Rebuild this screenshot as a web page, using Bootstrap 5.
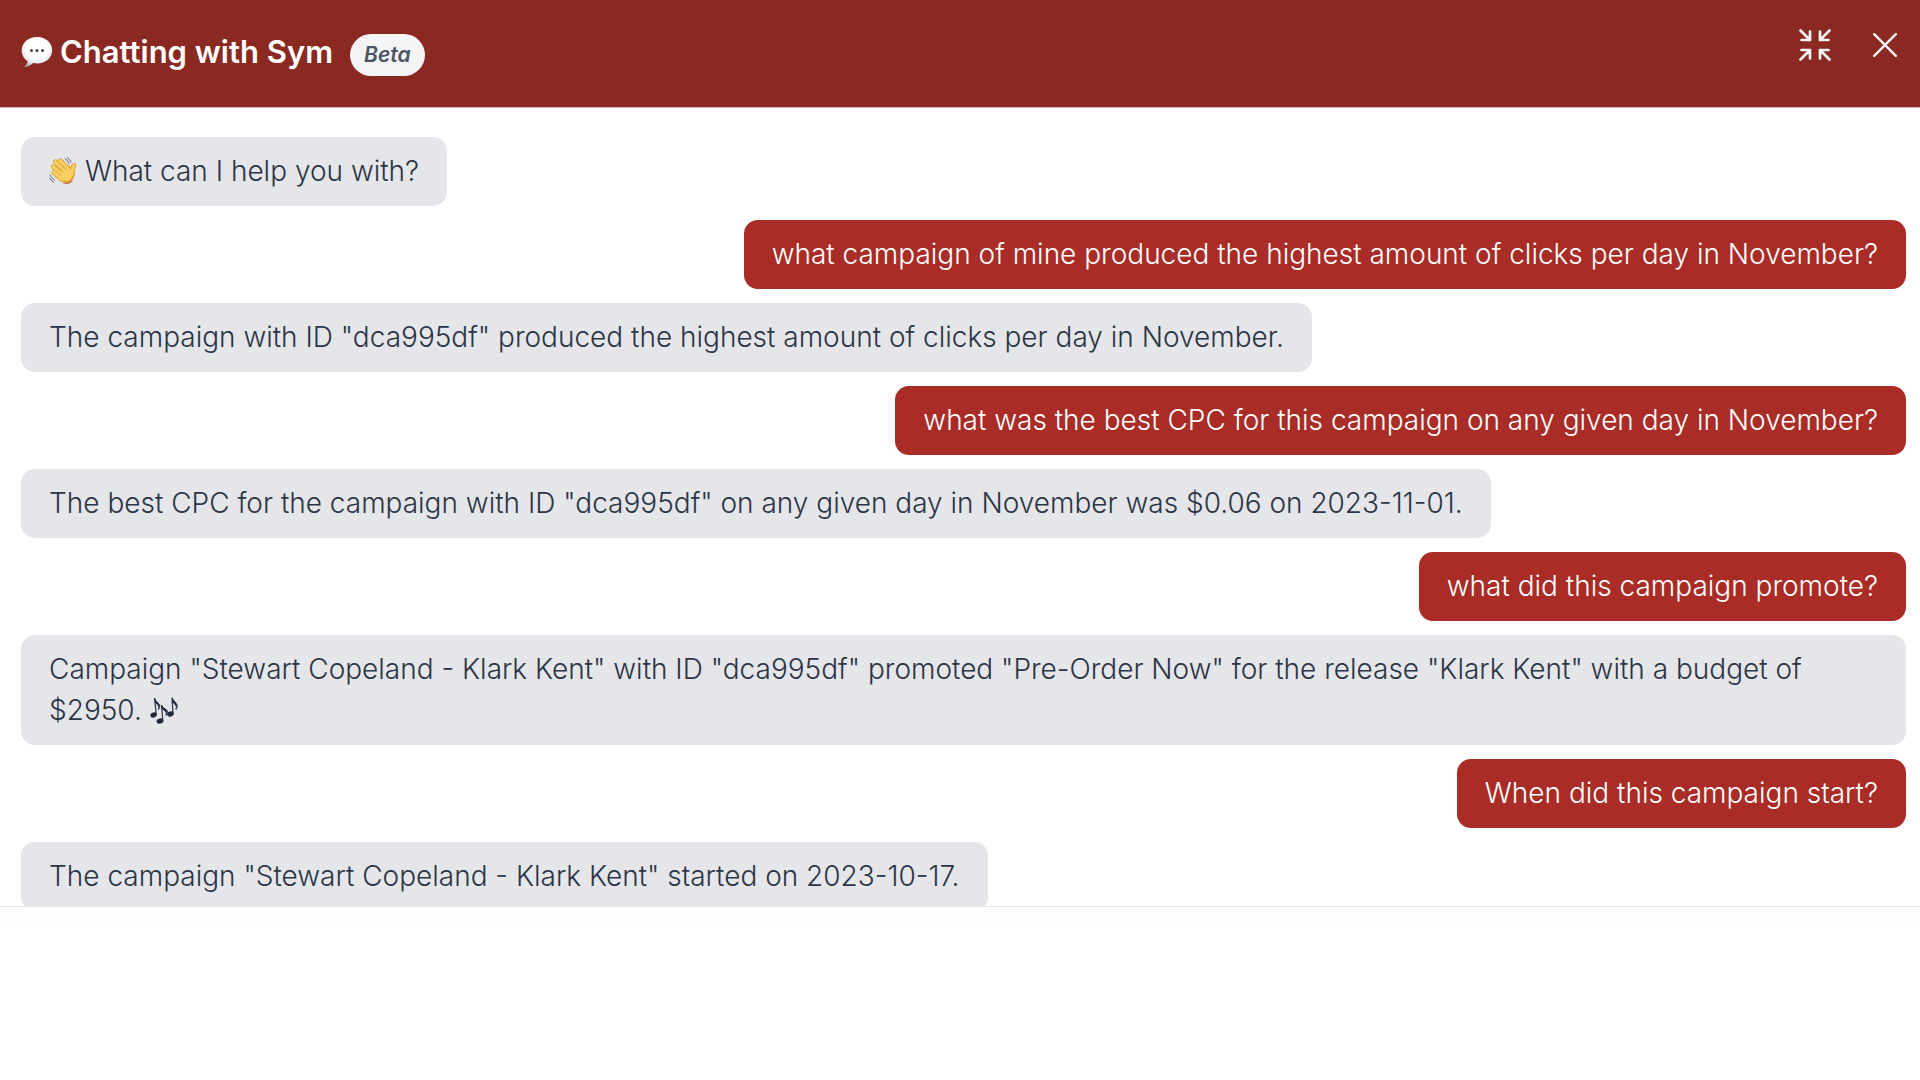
<!DOCTYPE html>
<html lang="en">
<head>
<meta charset="utf-8">
<meta name="viewport" content="width=device-width, initial-scale=1">
<title>Chatting with Sym</title>
<link href="https://cdn.jsdelivr.net/npm/bootstrap@5.3.0/dist/css/bootstrap.min.css" rel="stylesheet">
<style>
  body { font-family: Inter, "Liberation Sans", sans-serif; color: #374151; }
  .chat-header { background: #8a2822; padding: 24px 14px 27px 21px; border-bottom: 1px solid #d8b9b8; }
  .chat-title { font-size: 31px; line-height: 56px; font-weight: 600; gap: 7px; }
  .beta-pill { font-size: 21px; line-height: 28px; padding: 7px 14px; background: #f3f4f6; color: #4b5563; margin: 6px 0 0 17px; }
  .head-actions { gap: 28px; }
  .head-btn { width: 42px; height: 42px; }
  .chat-log { padding: 29px 14px 0 21px; gap: 14px; }
  .bubble { font-size: 28px; line-height: 41px; font-weight: 300; padding: 14px 28px; border-radius: 14px; max-width: 100%; }
  .from-sym { background: #e5e6ea; color: #2b3546; }
  .from-user { background: #a92c26; color: #fff; }
  .emoji { width: 28px; height: 28px; vertical-align: -4px; }
  .chat-footer { border-top: 1px solid #e5e6ea; padding: 86px 0 87px; background: linear-gradient(#fdfdfd, #fff 24px); }
</style>
</head>
<body class="vh-100 d-flex flex-column overflow-hidden bg-white">

<header class="chat-header d-flex justify-content-between align-items-start flex-shrink-0">
  <div class="d-flex align-items-center">
    <h1 class="chat-title d-flex align-items-center text-white m-0">
      <svg width="32" height="32" viewBox="0 0 32 32" aria-hidden="true">
        <defs>
          <radialGradient id="speech" cx=".5" cy=".35" r=".65">
            <stop offset=".55" stop-color="#fff"/><stop offset=".85" stop-color="#e2e5e9"/><stop offset="1" stop-color="#a9b0b8"/>
          </radialGradient>
        </defs>
        <path d="M16 1C7.300 1 .7 6.700.7 14.200c0 4.900 2.300 8.600 6 10.900-.3 2.500-1.700 4.500-3.500 5.900 3.600.1 6.800-1.500 8.900-3.900 1.300.2 2.500.3 3.900.3 8.700 0 15.200-5.600 15.200-13.200S24.700 1 16 1z" fill="url(#speech)"/>
        <g fill="#38424f"><circle cx="10.500" cy="14.500" r="1.500"/><circle cx="16" cy="14.500" r="1.500"/><circle cx="21.500" cy="14.500" r="1.500"/></g>
      </svg>
      Chatting with Sym
    </h1>
    <span class="beta-pill rounded-pill fst-italic fw-semibold">Beta</span>
  </div>
  <div class="head-actions d-flex">
    <button type="button" class="head-btn btn p-0 border-0 d-flex align-items-center justify-content-center" aria-label="Shrink">
      <svg width="32" height="32" viewBox="0 0 32 32" fill="none" stroke="#f6f3f4" stroke-width="2.700" stroke-linecap="round" stroke-linejoin="round" aria-hidden="true">
        <path d="M1.500 1.500 11 11M11 2.500V11H2.500M30.500 1.500 21 11M21 2.500V11h8.500M1.500 30.500 11 21M2.500 21H11v8.500M30.500 30.500 21 21M29.500 21H21v8.500"/>
      </svg>
    </button>
    <button type="button" class="head-btn btn p-0 border-0 d-flex align-items-center justify-content-center" aria-label="Close">
      <svg width="24" height="24" viewBox="0 0 24 24" fill="none" stroke="#f6f3f4" stroke-width="2.400" stroke-linecap="round" aria-hidden="true">
        <path d="M1.200 1.200 22.800 22.800M22.800 1.200 1.200 22.800"/>
      </svg>
    </button>
  </div>
</header>

<main class="chat-log d-flex flex-column flex-grow-1 overflow-hidden">
  <div class="bubble from-sym align-self-start flex-shrink-0">
    <svg class="emoji" viewBox="0 0 28 28" aria-hidden="true">
      <g fill="none" stroke-linecap="round">
        <g stroke="#dda238" stroke-width="5">
          <path d="M6.300 4.800 16 15M11.300 3.800 19 12M4.300 9.800 14 19M5 15.500 13 22.500M22.500 17 24.800 8.500"/>
        </g>
        <path d="M12 12 20 9.500 25 16Q24.500 22 19.500 25 13 25 10 20z" fill="#f8cf60" stroke="#dda238" stroke-width="2"/>
        <g stroke="#f8cf60" stroke-width="3.400">
          <path d="M6.300 4.800 16 15M11.300 3.800 19 12M4.300 9.800 14 19M5 15.500 13 22.500M22.500 17 24.800 8.500"/>
        </g>
        <path d="M14.500 26Q19 27.500 23 24" stroke="#c86c3c" stroke-width="1.200"/>
        <path d="M8 8.500 14 15M12.500 7.500 17.500 13M7 14 12.500 19" stroke="#d99b35" stroke-width=".8"/>
        <path d="M16 1.500Q19 3 20 6.500M18.500.8Q21 2.300 22 5M1 18Q2 21 5.500 23M.8 21.500Q2 24 4.500 25" stroke="#5c6370" stroke-width="1"/>
      </g>
    </svg>
    What can I help you with?
  </div>
  <div class="bubble from-user align-self-end flex-shrink-0">what campaign of mine produced the highest amount of clicks per day in November?</div>
  <div class="bubble from-sym align-self-start flex-shrink-0">The campaign with ID "dca995df" produced the highest amount of clicks per day in November.</div>
  <div class="bubble from-user align-self-end flex-shrink-0">what was the best CPC for this campaign on any given day in November?</div>
  <div class="bubble from-sym align-self-start flex-shrink-0">The best CPC for the campaign with ID "dca995df" on any given day in November was $0.06 on 2023-11-01.</div>
  <div class="bubble from-user align-self-end flex-shrink-0">what did this campaign promote?</div>
  <div class="bubble from-sym align-self-start flex-shrink-0">Campaign "Stewart Copeland - Klark Kent" with ID "dca995df" promoted "Pre-Order Now" for the release "Klark Kent" with a budget of $2950.
    <svg class="emoji" viewBox="0 0 28 28" aria-hidden="true">
      <g fill="#202b3a">
        <ellipse cx="3.700" cy="19" rx="3.400" ry="2.500" transform="rotate(-15 3.700 19)"/>
        <ellipse cx="10" cy="25" rx="3.500" ry="2.600" transform="rotate(-12 10 25)"/>
        <ellipse cx="20.500" cy="18" rx="3.400" ry="2.500" transform="rotate(-15 20.500 18)"/>
      </g>
      <g fill="none" stroke="#303c4c" stroke-width="1.300" stroke-linecap="round">
        <path d="M6.300 18.500 4.500 2Q5 5.500 8 7.500T8.500 13M12.800 24.500 11.500 9Q12 12 15.500 13.500T16 19M23 17.500 22 1.500Q22.500 4.500 25.500 7T26 13"/>
      </g>
      <g fill="#202b3a"><path d="M4.500 2Q6 5 8.500 7.500 9.500 10 8.800 12 7.500 8 5 6.500zM11.500 9Q13 11.500 16 13.500 17 16 16.300 18 15 14.500 12 13zM22 1.500Q23.500 4.500 26 7 27 9.500 26.300 12 25 8 22.500 6.500z"/></g>
    </svg>
  </div>
  <div class="bubble from-user align-self-end flex-shrink-0">When did this campaign start?</div>
  <div class="bubble from-sym align-self-start flex-shrink-0">The campaign "Stewart Copeland - Klark Kent" started on 2023-10-17.</div>
</main>

<footer class="chat-footer flex-shrink-0"></footer>

<script src="https://cdn.jsdelivr.net/npm/bootstrap@5.3.0/dist/js/bootstrap.bundle.min.js"></script>
</body>
</html>
